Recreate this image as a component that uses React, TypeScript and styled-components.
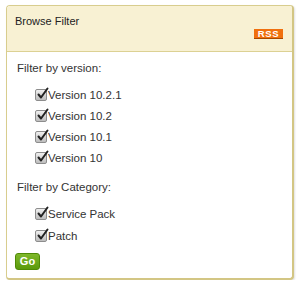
import React from "react";
import styled, { createGlobalStyle } from "styled-components";

const Global = createGlobalStyle`
  html, body { margin: 0; padding: 0; background: #ffffff; }
  body { font-family: "Liberation Sans", Arial, sans-serif; }
`;

const Panel = styled.div`
  margin: 5px 0 0 6px;
  width: 285px;
  height: 272px;
  border: 1px solid #d8cd8e;
  border-right: 2px solid #d3c684;
  border-bottom: 2px solid #d3c684;
  border-radius: 4px;
  background: #ffffff;
  box-shadow: 1px 1px 2px rgba(0, 0, 0, 0.12);
  overflow: hidden;
  display: flex;
  flex-direction: column;
`;

const Header = styled.div`
  height: 46px;
  box-sizing: border-box;
  background: #f8f1d3;
  border-bottom: 1px solid #dcd193;
  padding: 8px 9px 0 8px;
  display: flex;
  flex-direction: column;
`;

const Title = styled.div`
  font-size: 11px;
  line-height: 14px;
  color: #222;
`;

const RssRow = styled.div`
  display: flex;
  justify-content: flex-end;
  margin-top: 1px;
`;

const Rss = styled.span`
  display: inline-flex;
  align-items: center;
  justify-content: center;
  width: 29px;
  height: 9px;
  background: #f0700e;
  border-bottom: 1px solid #a84800;
  color: #ffffff;
  font-size: 9.5px;
  font-weight: bold;
  letter-spacing: 0.6px;
  line-height: 9px;
`;

const Body = styled.div`
  padding: 8px 10px 0 10px;
  display: flex;
  flex-direction: column;
`;

const Heading = styled.div<{ $gap: number }>`
  font-size: 11.5px;
  line-height: 16px;
  color: #333;
  margin-top: ${(p) => p.$gap}px;
`;

const List = styled.div<{ $row: number }>`
  display: flex;
  flex-direction: column;
  padding-left: 18px;
  margin-top: 8px;
  & > label {
    height: ${(p) => p.$row}px;
  }
`;

const Item = styled.label`
  display: flex;
  align-items: center;
  font-size: 11.5px;
  color: #333;
  cursor: pointer;
`;

const Box = styled.span`
  width: 10px;
  height: 10px;
  margin-right: 1px;
  border: 1px solid #8d8d8d;
  border-radius: 2px;
  background: linear-gradient(#f0f0f0, #bdbdbd);
  position: relative;
  flex: none;
  & > svg {
    position: absolute;
    left: 0px;
    top: -3px;
  }
`;

const GoButton = styled.button`
  margin-top: 6px;
  margin-left: -2px;
  align-self: flex-start;
  width: 25px;
  height: 17px;
  padding: 0;
  border: 1px solid #4f8a06;
  border-radius: 3px;
  background: linear-gradient(#7fb82a, #5a9a0c);
  color: #ffffff;
  font-family: "Liberation Sans", Arial, sans-serif;
  font-size: 11px;
  font-weight: bold;
  line-height: 15px;
`;

const Check = ({ label }: { label: string }) => (
  <Item>
    <Box>
      <svg width="13" height="13" viewBox="0 0 13 13">
        <path d="M2.5 7.5 L5 10.5 L11.5 1.5" fill="none" stroke="#222" strokeWidth="2" strokeLinecap="round" strokeLinejoin="round" />
      </svg>
    </Box>
    {label}
  </Item>
);

export default function App() {
  return (
    <>
      <Global />
      <Panel>
        <Header>
          <Title>Browse Filter</Title>
          <RssRow>
            <Rss>RSS</Rss>
          </RssRow>
        </Header>
        <Body>
          <Heading $gap={0}>Filter by version:</Heading>
          <List $row={21}>
            <Check label="Version 10.2.1" />
            <Check label="Version 10.2" />
            <Check label="Version 10.1" />
            <Check label="Version 10" />
          </List>
          <Heading $gap={11}>Filter by Category:</Heading>
          <List $row={22}>
            <Check label="Service Pack" />
            <Check label="Patch" />
          </List>
          <GoButton>Go</GoButton>
        </Body>
      </Panel>
    </>
  );
}
